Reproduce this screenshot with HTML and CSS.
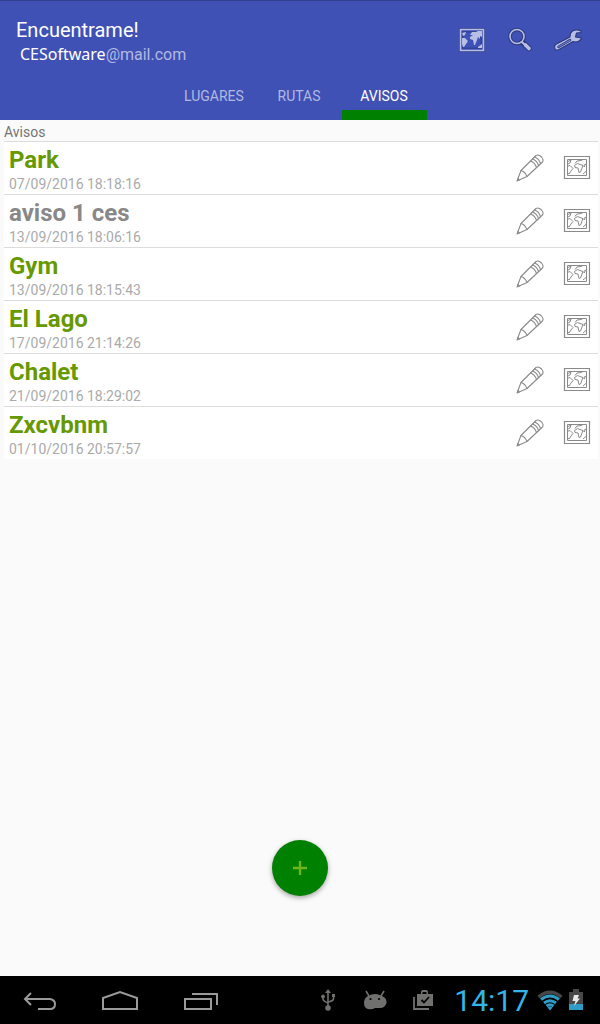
FILE: index.html
```html
<!DOCTYPE html>
<html lang="es">
<head>
<meta charset="utf-8">
<meta name="viewport" content="width=device-width, initial-scale=1">
<title>Encuentrame!</title>
<link rel="stylesheet" href="styles.css">
</head>
<body>
<svg class="sprite" aria-hidden="true">
  <symbol id="pencil" viewBox="0 0 28 28">
    <g fill="none" stroke="currentColor" stroke-width="1.100" stroke-linejoin="round" stroke-linecap="round">
      <path d="M1 27L5 16.500L20 1.500Q22.500 0 25.500 3Q28 6 26.500 8L11 22.500Z"/>
      <path d="M5 16.500Q9 17.500 11 22.500M14.500 7Q19 8.500 20.500 13.500M16.500 5Q21 6.500 22.500 11.500M18.500 3Q23 4.500 24.500 9.500M1.800 24.500L3.500 26"/>
    </g>
  </symbol>
  <symbol id="map" viewBox="0 0 28 26">
    <g fill="none" stroke="currentColor">
      <path d="M1.500 1.500H26.500V23.500H1.500Z" stroke-width="1.200"/>
      <path d="M4.500 4.500H23.500V20.500H4.500Z" stroke-width="1"/>
      <path d="M4 7L8 5L7 8L4 9.500M4 11.500L7 10.500L10 13.500L8 16L6 19L4 17.500M12 8.500L14 6L18 5.500L20 4.500M23.500 10L22 9L21.500 12L20 10.500L19 13L17.500 17L16 17.500L15 13L12 12.500L11.500 10.500L14.500 8.500L17 9.500L20 10.500M20 19L23.500 16" stroke-width="1" stroke-linejoin="round"/>
    </g>
  </symbol>
</svg>
<header class="header">
  <div class="top">
    <div class="titles">
      <h1 class="title">Encuentrame!</h1>
      <p class="account"><span class="user">CESoftware</span><span class="domain">@mail.com</span></p>
    </div>
    <div class="actions">
      <button class="action" type="button" aria-label="Mapa">
        <svg width="28" height="26" viewBox="0 0 28 26">
          <path d="M1 1H27V25H1Z" fill="#303c85"/>
          <path d="M2.500 2.500H25.500V23.500H2.500Z" fill="#3f51b5" stroke="#b8bfe4" stroke-width="1.600"/>
          <path d="M4 4H24V22H4Z" fill="#34429a"/>
          <path d="M5.500 5.500H22.500V20.500H5.500Z" fill="#3f51b5"/>
          <path d="M4 6L8 5L7 8L5 9ZM4 11L7 11L10 14L8 17L6 20L5 20L4 17ZM12 8L14 5L18 5L20 4H24V10L22 9L22 12L20 10L19 13L17 18L16 18L15 13L12 12L12 10L15 8L18 8ZM20 20L24 17V21H20Z" fill="#b8bfe4"/>
        </svg>
      </button>
      <button class="action" type="button" aria-label="Buscar">
        <svg width="26" height="26" viewBox="0 0 26 26" fill="none" stroke-linecap="round">
          <circle cx="10" cy="9.500" r="7" stroke="#2c387d" stroke-width="3.600"/>
          <path d="M15 15L17 17M18.500 18L22 21.500" stroke="#2c387d" stroke-width="5.400"/>
          <circle cx="10" cy="9.500" r="7" stroke="#b8bfe4" stroke-width="1.600"/>
          <path d="M15 15L17 17" stroke="#b8bfe4" stroke-width="2"/>
          <path d="M18.500 18L22 21.500" stroke="#b8bfe4" stroke-width="3.600"/>
        </svg>
      </button>
      <button class="action" type="button" aria-label="Ajustes">
        <svg width="30" height="24" viewBox="0 0 30 24" stroke-linejoin="round">
          <path d="M2.500 16.500L17 9Q17 4 20.500 2.500Q23.500 1 28 3V4.500L23.500 5L22.500 9L28.500 10Q27 14 22 14L20 13.500L6 21.500Q3 23 1.800 20.500Q1 18 2.500 16.500Z" fill="#b8bfe4" stroke="#2c387d" stroke-width="1.100"/>
          <path d="M5.500 18.800L17 12.200" fill="none" stroke="#2c387d" stroke-width="2.600" stroke-linecap="round"/>
          <path d="M5.500 18.800L17 12.200" fill="none" stroke="#6a78c6" stroke-width="1.200" stroke-linecap="round"/>
        </svg>
      </button>
    </div>
  </div>
  <nav class="tabs">
    <button class="tab" type="button">LUGARES</button>
    <button class="tab" type="button">RUTAS</button>
    <button class="tab tab-active" type="button">AVISOS</button>
  </nav>
</header>
<main class="main">
  <h2 class="heading">Avisos</h2>
  <ul class="list">
    <li class="row">
      <div class="info"><strong class="name">Park</strong><span class="date">07/09/2016 18:18:16</span></div>
      <button class="tool" type="button" aria-label="Editar Park"><svg width="28" height="28"><use href="#pencil"/></svg></button>
      <button class="tool" type="button" aria-label="Mapa de Park"><svg width="28" height="26"><use href="#map"/></svg></button>
    </li>
    <li class="row">
      <div class="info"><strong class="name name-off">aviso 1 ces</strong><span class="date">13/09/2016 18:06:16</span></div>
      <button class="tool" type="button" aria-label="Editar aviso 1 ces"><svg width="28" height="28"><use href="#pencil"/></svg></button>
      <button class="tool" type="button" aria-label="Mapa de aviso 1 ces"><svg width="28" height="26"><use href="#map"/></svg></button>
    </li>
    <li class="row">
      <div class="info"><strong class="name">Gym</strong><span class="date">13/09/2016 18:15:43</span></div>
      <button class="tool" type="button" aria-label="Editar Gym"><svg width="28" height="28"><use href="#pencil"/></svg></button>
      <button class="tool" type="button" aria-label="Mapa de Gym"><svg width="28" height="26"><use href="#map"/></svg></button>
    </li>
    <li class="row">
      <div class="info"><strong class="name">El Lago</strong><span class="date">17/09/2016 21:14:26</span></div>
      <button class="tool" type="button" aria-label="Editar El Lago"><svg width="28" height="28"><use href="#pencil"/></svg></button>
      <button class="tool" type="button" aria-label="Mapa de El Lago"><svg width="28" height="26"><use href="#map"/></svg></button>
    </li>
    <li class="row">
      <div class="info"><strong class="name">Chalet</strong><span class="date">21/09/2016 18:29:02</span></div>
      <button class="tool" type="button" aria-label="Editar Chalet"><svg width="28" height="28"><use href="#pencil"/></svg></button>
      <button class="tool" type="button" aria-label="Mapa de Chalet"><svg width="28" height="26"><use href="#map"/></svg></button>
    </li>
    <li class="row">
      <div class="info"><strong class="name">Zxcvbnm</strong><span class="date">01/10/2016 20:57:57</span></div>
      <button class="tool" type="button" aria-label="Editar Zxcvbnm"><svg width="28" height="28"><use href="#pencil"/></svg></button>
      <button class="tool" type="button" aria-label="Mapa de Zxcvbnm"><svg width="28" height="26"><use href="#map"/></svg></button>
    </li>
  </ul>
  <button class="add" type="button" aria-label="Añadir aviso">
    <svg width="14" height="14" viewBox="0 0 14 14"><path d="M7 0V14M0 7H14" stroke="#6fb51a" stroke-width="2.400"/></svg>
  </button>
</main>
<footer class="system">
  <div class="keys">
    <button class="key" type="button" aria-label="Atrás">
      <svg width="36" height="24" viewBox="0 0 36 24" fill="none" stroke="#9a9a9a" stroke-width="2"><path d="M9 5L3 11L9 17M3 11H28Q33 12 33 16Q33 21 28 21H16"/></svg>
    </button>
    <button class="key" type="button" aria-label="Inicio">
      <svg width="38" height="24" viewBox="0 0 38 24" fill="none" stroke="#9a9a9a" stroke-width="2"><path d="M2 21V10L19 4L36 10V21Z"/></svg>
    </button>
    <button class="key" type="button" aria-label="Recientes">
      <svg width="36" height="24" viewBox="0 0 36 24" fill="none" stroke="#9a9a9a" stroke-width="2"><path d="M3 11H29V21H3ZM10 6H35V17"/></svg>
    </button>
  </div>
  <div class="status">
    <svg width="16" height="22" viewBox="0 0 16 22" fill="#70706e"><path d="M8 0L11 4H5Z"/><circle cx="8" cy="19" r="2.800"/><circle cx="3" cy="7.500" r="1.900"/><path d="M12 5H15V8H12Z"/><path d="M8 3V18M3 8V10Q3 12 8 14M13.500 7V10Q13 12 8 13" fill="none" stroke="#70706e" stroke-width="1.600"/></svg>
    <svg class="droid" width="24" height="20" viewBox="0 0 24 20"><path d="M3 1L6 6M21 1L18 6" stroke="#70706e" stroke-width="1.600"/><path d="M5 6Q12 2 19 6Q24 8 23.500 13Q22 18 17 18L12 18Q9 20 5 19Q1 18 1 13Q1 8 5 6Z" fill="#70706e"/><circle cx="7.500" cy="9" r="1.100"/><circle cx="16" cy="9" r="1.100"/></svg>
    <svg width="22" height="22" viewBox="0 0 22 22"><path d="M5 5H9V3Q9 1 11 1H14Q16 1 16 3V5H21V17H5ZM10.500 5H14.500V3H10.500Z" fill="#70706e" fill-rule="evenodd"/><path d="M2 8V20H17" fill="none" stroke="#70706e" stroke-width="1.800"/><path d="M9.500 11L12 13.500L17 8" fill="none" stroke="#000" stroke-width="1.800"/></svg>
    <time class="clock">14:17</time>
    <svg width="26" height="22" viewBox="0 0 26 22" fill="none"><path d="M1.500 8Q13-1.500 24.500 8" stroke="#474747" stroke-width="3.500"/><g stroke="#2f9cc5" stroke-width="3"><path d="M4 10.500Q13 3.500 22 10.500M7 14Q13 9.500 19 14M9.500 17Q13 14.500 16.500 17"/></g><path d="M10.500 18.500Q13 16.500 15.500 18.500L13 21.500Z" fill="#2f9cc5"/></svg>
    <svg width="14" height="22" viewBox="0 0 14 22"><path d="M0 3H4V0H10V3H14V16H0Z" fill="#474747"/><path d="M0 15H14V21H0Z" fill="#2f9cc5"/><path d="M5 6H10L8.500 9.500H11L5 17L6.500 12H3.500Z" fill="#e8e8e8"/></svg>
  </div>
</footer>
</body>
</html>
```
FILE: styles.css
```css
* { box-sizing: border-box; }
body {
  margin: 0;
  min-height: 100vh;
  display: flex;
  flex-direction: column;
  background: #fafafa;
  font-family: Roboto, sans-serif;
}
.sprite { position: absolute; width: 0; height: 0; }
button {
  border: 0;
  padding: 0;
  background: none;
  font: inherit;
  color: inherit;
  display: flex;
  align-items: center;
  justify-content: center;
}
svg { display: block; flex: none; }
h1, h2, p, ul { margin: 0; padding: 0; font-weight: 400; }
.header { background: #3f51b5; border-top: 1px solid #303f8f; color: #fff; }
.top {
  display: flex;
  justify-content: space-between;
  padding: 15px 8px 0 16px;
}
.titles { padding-top: 2px; }
.title { font-size: 20px; line-height: 24px; }
.account { font-size: 16px; line-height: 24px; padding-left: 4px; }
.user { font-family: "Noto Sans", sans-serif; font-size: 16px; }
.domain { color: #b2b9e1; }
.actions { display: flex; }
.action { width: 48px; height: 48px; }
.tabs { display: flex; justify-content: center; padding: 5px 2px 0 0; }
.tab {
  min-width: 85px;
  height: 48px;
  padding-top: 10px;
  border-bottom: 10px solid transparent;
  font-size: 14px;
  line-height: 20px;
  color: #b2b9e1;
}
.tab-active { color: #fff; border-bottom-color: #008000; }
.main { flex: 1; display: flex; flex-direction: column; padding-bottom: 80px; }
.heading { font-size: 14px; line-height: 20px; height: 21px; padding: 2px 4px 0; color: #757575; }
.list { list-style: none; padding: 0 2px 0 4px; }
.row {
  display: flex;
  align-items: center;
  gap: 5px;
  height: 53px;
  padding-left: 5px;
  background: #fff;
  border-top: 1px solid #dcdcdc;
}
.info { flex: 1; display: flex; flex-direction: column; padding-top: 4px; }
.name { font-size: 24px; line-height: 28px; color: #669900; }
.name-off { color: #888; }
.date { font-size: 14px; line-height: 20px; color: #aaa; }
.tool { width: 42px; height: 48px; color: #8a8a8a; }
.add {
  width: 56px;
  height: 56px;
  margin: auto auto 0;
  border-radius: 50%;
  background: #008000;
  box-shadow: 0 2px 5px rgba(0, 0, 0, .35);
}
.system {
  display: flex;
  align-items: center;
  justify-content: space-between;
  height: 48px;
  padding-right: 17px;
  background: #000;
}
.keys, .status { display: flex; align-items: center; }
.key { width: 80px; height: 48px; }
.status { gap: 6px; }
.droid { margin: 0 19px 0 21px; }
.clock { margin: 2px 2px 0 14px; font-size: 30px; line-height: 46px; color: #33b5e5; }
```
